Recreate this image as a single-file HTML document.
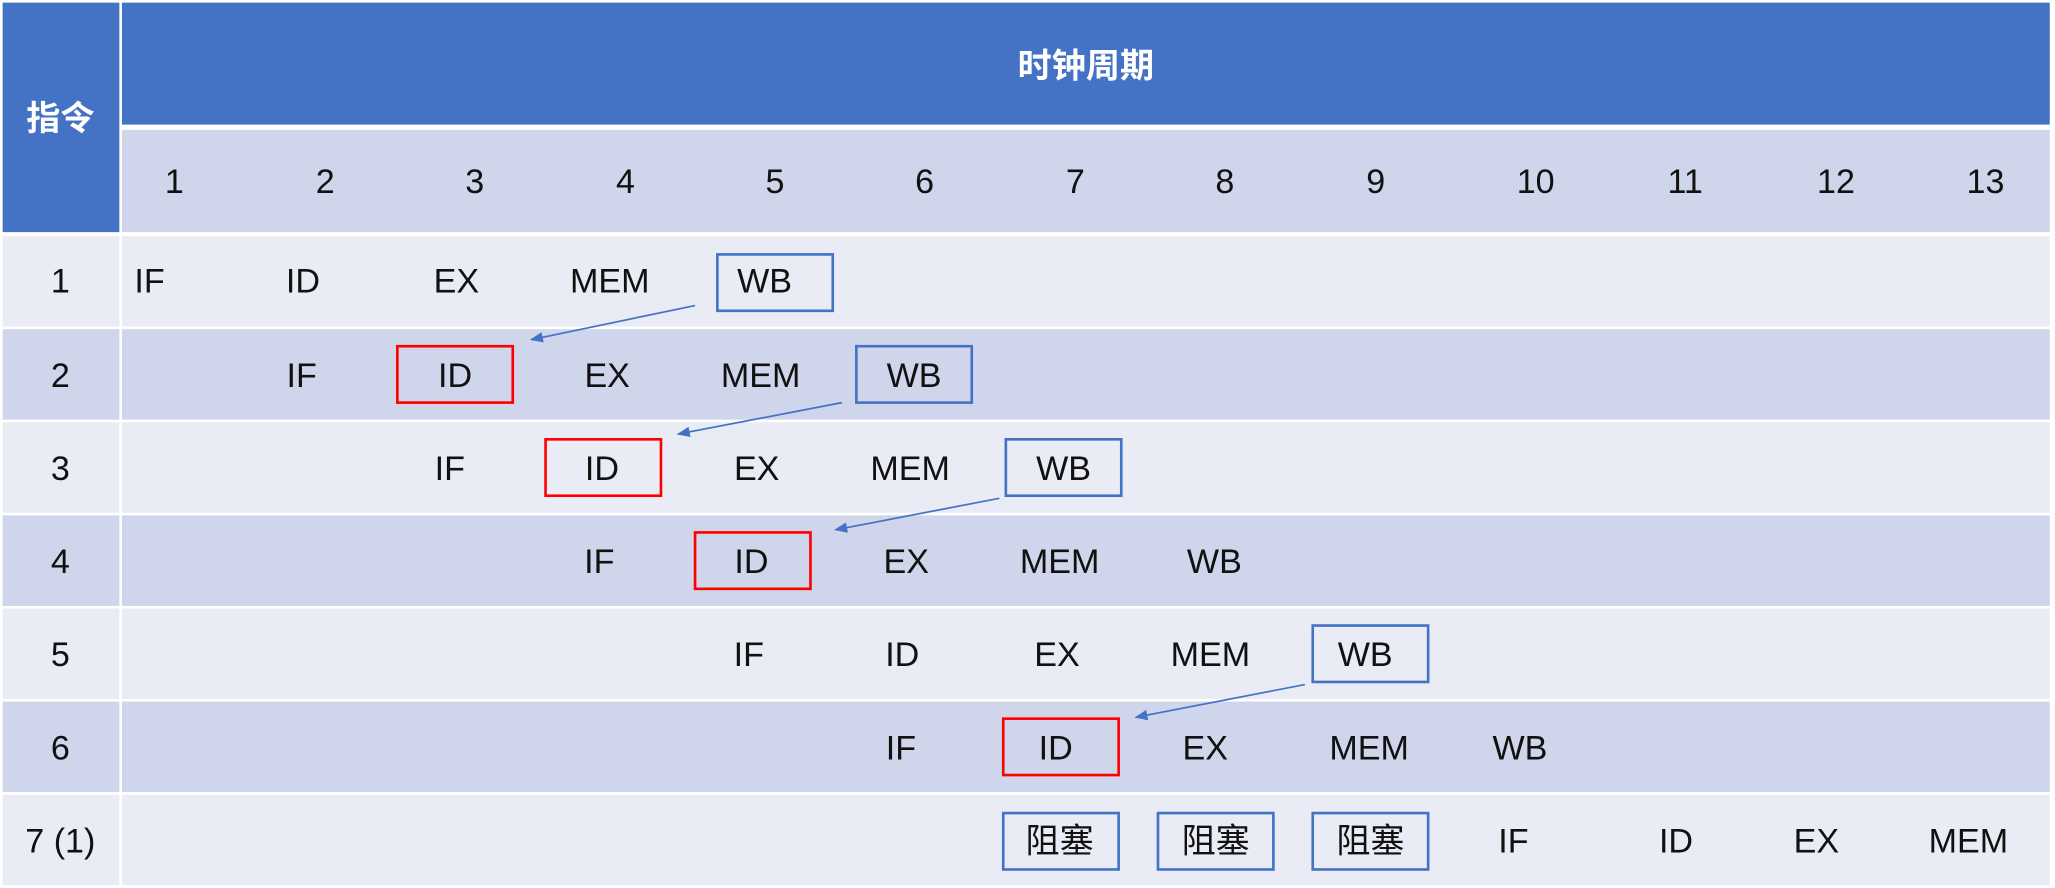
<!DOCTYPE html>
<html><head><meta charset="utf-8">
<style>
html,body{margin:0;padding:0;background:#fff;width:2055px;height:888px;overflow:hidden}
#w{position:absolute;left:0;top:0;width:1567px;height:677px;transform:scale(1.31142);transform-origin:0 0;font-family:"Liberation Sans","Noto Sans CJK SC",sans-serif;color:#111}
.r{position:absolute}
.t{position:absolute;transform:translate(-50%,-50%);font-size:26px;white-space:nowrap;line-height:1}
.b{position:absolute;width:86px;height:41px;border:2.5px solid #4472c4;box-sizing:content-box}
.red{border-color:#ff0000}
</style></head><body><div id="w">
<div class="r" style="left:2px;top:2px;width:89px;height:175px;background:#4472c4"></div>
<div class="r" style="left:93px;top:2px;width:1470px;height:93px;background:#4472c4"></div>
<div class="r" style="left:93px;top:99px;width:1470px;height:78px;background:#cfd5ea"></div>
<div class="t" style="left:46px;top:90px;color:#fff;font-weight:bold;font-size:26px">指令</div>
<div class="t" style="left:828px;top:50px;color:#fff;font-weight:bold;font-size:26px">时钟周期</div>

<div class="r" style="left:2px;top:180px;width:89px;height:69px;background:#e9ebf5"></div><div class="r" style="left:93px;top:180px;width:1470px;height:69px;background:#e9ebf5"></div>
<div class="r" style="left:2px;top:251px;width:89px;height:69px;background:#cfd5ea"></div><div class="r" style="left:93px;top:251px;width:1470px;height:69px;background:#cfd5ea"></div>
<div class="r" style="left:2px;top:322px;width:89px;height:69px;background:#e9ebf5"></div><div class="r" style="left:93px;top:322px;width:1470px;height:69px;background:#e9ebf5"></div>
<div class="r" style="left:2px;top:393px;width:89px;height:69px;background:#cfd5ea"></div><div class="r" style="left:93px;top:393px;width:1470px;height:69px;background:#cfd5ea"></div>
<div class="r" style="left:2px;top:464px;width:89px;height:69px;background:#e9ebf5"></div><div class="r" style="left:93px;top:464px;width:1470px;height:69px;background:#e9ebf5"></div>
<div class="r" style="left:2px;top:535px;width:89px;height:69px;background:#cfd5ea"></div><div class="r" style="left:93px;top:535px;width:1470px;height:69px;background:#cfd5ea"></div>
<div class="r" style="left:2px;top:606px;width:89px;height:69px;background:#e9ebf5"></div><div class="r" style="left:93px;top:606px;width:1470px;height:69px;background:#e9ebf5"></div>

<div class="t" style="left:133px;top:138px">1</div><div class="t" style="left:248px;top:138px">2</div><div class="t" style="left:362px;top:138px">3</div><div class="t" style="left:477px;top:138px">4</div><div class="t" style="left:591px;top:138px">5</div><div class="t" style="left:705px;top:138px">6</div><div class="t" style="left:820px;top:138px">7</div><div class="t" style="left:934px;top:138px">8</div><div class="t" style="left:1049px;top:138px">9</div><div class="t" style="left:1171px;top:138px">10</div><div class="t" style="left:1285px;top:138px">11</div><div class="t" style="left:1400px;top:138px">12</div><div class="t" style="left:1514px;top:138px">13</div>

<div class="t" style="left:46px;top:214px">1</div><div class="t" style="left:46px;top:286px">2</div><div class="t" style="left:46px;top:357px">3</div><div class="t" style="left:46px;top:428px">4</div><div class="t" style="left:46px;top:499px">5</div><div class="t" style="left:46px;top:570px">6</div><div class="t" style="left:46px;top:641px">7 (1)</div>

<!-- boxes -->
<div class="b" style="left:546px;top:193px"></div>
<div class="b red" style="left:302px;top:263px"></div>
<div class="b" style="left:652px;top:263px"></div>
<div class="b red" style="left:415px;top:334px"></div>
<div class="b" style="left:766px;top:334px"></div>
<div class="b red" style="left:529px;top:405px"></div>
<div class="b" style="left:1000px;top:476px"></div>
<div class="b red" style="left:764px;top:547px"></div>
<div class="b" style="left:764px;top:619px"></div>
<div class="b" style="left:882px;top:619px"></div>
<div class="b" style="left:1000px;top:619px"></div>

<!-- row text -->
<div class="t" style="left:114px;top:214px">IF</div><div class="t" style="left:231px;top:214px">ID</div><div class="t" style="left:348px;top:214px">EX</div><div class="t" style="left:465px;top:214px">MEM</div><div class="t" style="left:583px;top:214px">WB</div>
<div class="t" style="left:230px;top:286px">IF</div><div class="t" style="left:347px;top:286px">ID</div><div class="t" style="left:463px;top:286px">EX</div><div class="t" style="left:580px;top:286px">MEM</div><div class="t" style="left:697px;top:286px">WB</div>
<div class="t" style="left:343px;top:357px">IF</div><div class="t" style="left:459px;top:357px">ID</div><div class="t" style="left:577px;top:357px">EX</div><div class="t" style="left:694px;top:357px">MEM</div><div class="t" style="left:811px;top:357px">WB</div>
<div class="t" style="left:457px;top:428px">IF</div><div class="t" style="left:573px;top:428px">ID</div><div class="t" style="left:691px;top:428px">EX</div><div class="t" style="left:808px;top:428px">MEM</div><div class="t" style="left:926px;top:428px">WB</div>
<div class="t" style="left:571px;top:499px">IF</div><div class="t" style="left:688px;top:499px">ID</div><div class="t" style="left:806px;top:499px">EX</div><div class="t" style="left:923px;top:499px">MEM</div><div class="t" style="left:1041px;top:499px">WB</div>
<div class="t" style="left:687px;top:570px">IF</div><div class="t" style="left:805px;top:570px">ID</div><div class="t" style="left:919px;top:570px">EX</div><div class="t" style="left:1044px;top:570px">MEM</div><div class="t" style="left:1159px;top:570px">WB</div>
<div class="t" style="left:808px;top:641px">阻塞</div><div class="t" style="left:927px;top:641px">阻塞</div><div class="t" style="left:1045px;top:641px">阻塞</div><div class="t" style="left:1154px;top:641px">IF</div><div class="t" style="left:1278px;top:641px">ID</div><div class="t" style="left:1385px;top:641px">EX</div><div class="t" style="left:1501px;top:641px">MEM</div>

<svg class="r" style="left:0;top:0" width="1567" height="677">
<defs><marker id="a" markerWidth="10" markerHeight="8" refX="9" refY="4" orient="auto" markerUnits="userSpaceOnUse"><path d="M0,0 L10,4 L0,8 z" fill="#4472c4"/></marker></defs>
<g stroke="#4472c4" stroke-width="1.3" marker-end="url(#a)">
<line x1="530" y1="233" x2="405" y2="259"/>
<line x1="642" y1="307" x2="517" y2="331"/>
<line x1="762" y1="380" x2="637" y2="404"/>
<line x1="995" y1="522" x2="866" y2="547"/>
</g></svg>
</div></body></html>
